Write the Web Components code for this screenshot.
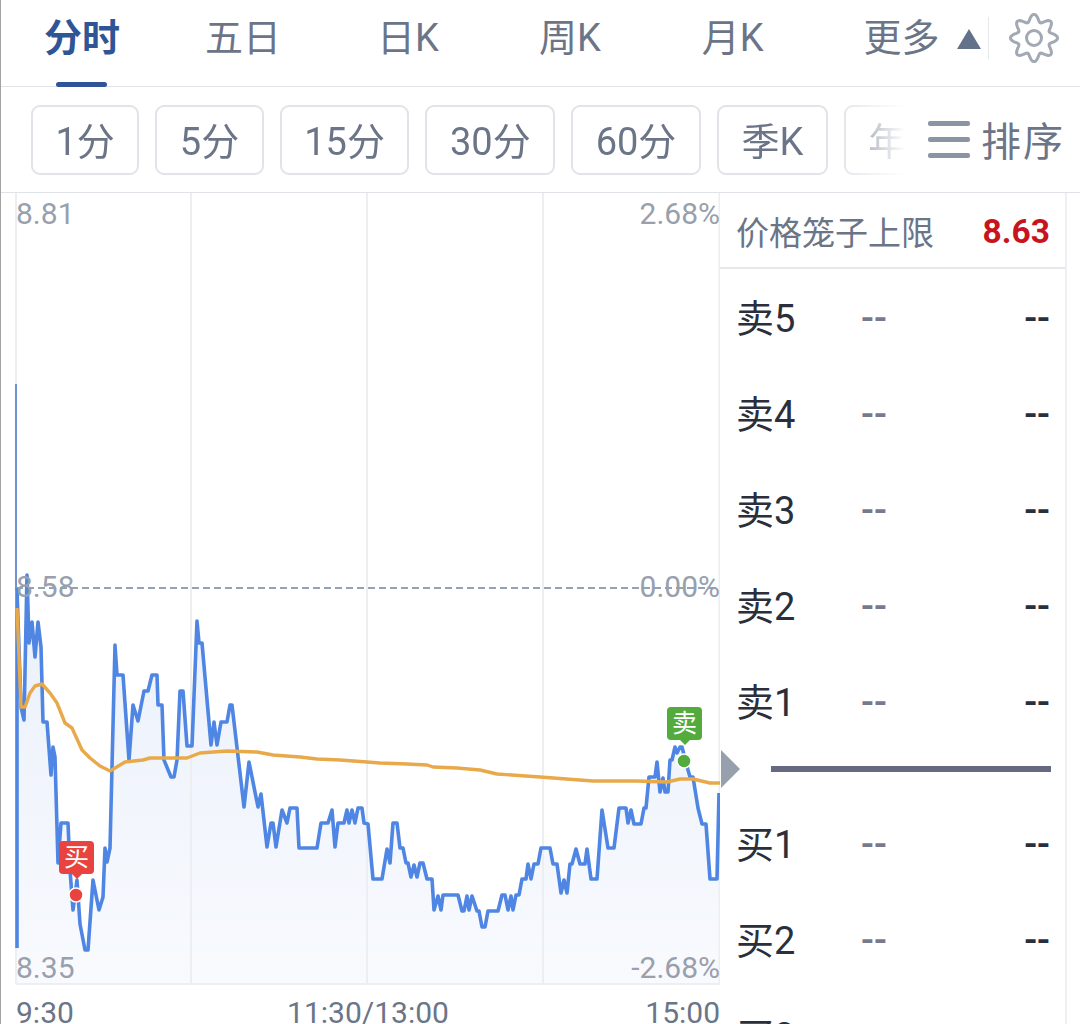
<!doctype html>
<html lang="zh">
<head>
<meta charset="utf-8">
<title>分时</title>
<style>
  html, body { margin: 0; padding: 0; background: #fff; overflow: hidden; }
  body { font-family: Roboto, "Noto Sans CJK SC", sans-serif; }
  quote-app { width: 1080px; height: 1024px; }
</style>
</head>
<body>

<template id="quote-app-template">
  <style>
    :host { display: flex; flex-direction: column; box-sizing: border-box; border-left: 1px solid #a3a3a3; overflow: hidden; background: #fff; }
    .body { display: flex; flex: 1; min-height: 0; }
  </style>
  <period-tabs></period-tabs>
  <period-chips></period-chips>
  <div class="body">
    <time-chart></time-chart>
    <order-book></order-book>
  </div>
</template>

<template id="period-tabs-template">
  <style>
    :host { display: flex; flex: none; box-sizing: border-box; height: 87px; padding-left: 43px; border-bottom: 1px solid #dfe2e7; font-size: 38px; color: #6b7587; position: relative; }
    .tab { line-height: 76px; white-space: nowrap; margin-right: 100px; }
    .tab.on { color: #2f5596; font-weight: 700; margin-right: 85px; position: relative; }
    .tab.on::after { content: ""; position: absolute; left: 12px; bottom: -1px; width: 51px; height: 5px; border-radius: 3px; background: #2f5596; }
    .tab.five { margin-right: 96px; }
    .tab.week { margin-right: 101px; }
    .more { margin-right: 0; display: flex; align-items: center; height: 76px; }
    .tri { width: 0; height: 0; margin-left: 17px; margin-top: 1px; border-left: 12px solid transparent; border-right: 12px solid transparent; border-bottom: 20px solid #63718a; }
    .sep { width: 1px; height: 42px; margin: 17px 0 0 7px; background: #e6e8ec; }
    svg { width: 50px; height: 50px; margin: 13px 0 0 20px; }
  </style>
  <div class="tab on">分时</div>
  <div class="tab five">五日</div>
  <div class="tab">日K</div>
  <div class="tab week">周K</div>
  <div class="tab">月K</div>
  <div class="tab more">更多<span class="tri"></span></div>
  <div class="sep"></div>
  <svg viewBox="0 0 50 50" fill="none" stroke="#a2a9b5" stroke-width="3" stroke-linejoin="round">
    <path id="gear"></path>
    <circle cx="25" cy="25" r="7.5"></circle>
  </svg>
</template>

<template id="period-chips-template">
  <style>
    :host { display: flex; flex: none; box-sizing: border-box; height: 106px; border-bottom: 1px solid #dfe2e7; color: #6b7587; font-size: 38px; }
    .list { display: flex; gap: 16px; width: 904px; flex: none; box-sizing: border-box; padding: 18px 0 0 30px; overflow: hidden;
      -webkit-mask-image: linear-gradient(to right, #000 835px, rgba(0,0,0,.45) 870px, transparent 904px); mask-image: linear-gradient(to right, #000 835px, rgba(0,0,0,.45) 870px, transparent 904px); }
    .sort { display: flex; align-items: center; margin-left: 23px; height: 105px; }
    .lines { display: flex; flex-direction: column; gap: 11px; margin-right: 11px; }
    .lines i { display: block; width: 42px; height: 5px; border-radius: 2px; background: #8a94a4; }
    .sort span { color: #6b7587; font-size: 40px; letter-spacing: 2px; white-space: nowrap; margin-top: -2px; }
  </style>
  <div class="list"><slot></slot></div>
  <div class="sort">
    <div class="lines"><i></i><i></i><i></i></div>
    <span>排序</span>
  </div>
</template>

<template id="chip-item-template">
  <style>
    :host { display: flex; flex: none; box-sizing: border-box; height: 70px; padding: 0 22.5px 3px; align-items: center; justify-content: center; border: 2px solid #e1e3e8; border-radius: 9px; white-space: nowrap; }
  </style>
  <slot></slot>
</template>

<template id="time-chart-template">
  <style>
    :host { display: block; position: relative; flex: none; width: 719px; height: 831px; font-size: 30px; color: #98a0ad; }
    svg { display: block; width: 719px; height: 792px; }
    .lb { position: absolute; line-height: 34px; white-space: nowrap; }
    .x { display: grid; grid-template-columns: 1fr auto 1fr; padding-left: 15px; color: #6b7587; line-height: 23px; margin-top: 16px; }
    .x span:last-child { text-align: right; }
    .tag { position: absolute; width: 35px; height: 33px; border-radius: 4px; color: #fff; font-size: 25px; line-height: 33px; text-align: center; }
    .tag::after { content: ""; position: absolute; left: 12px; bottom: -5px; width: 0; height: 0; border-left: 6px solid transparent; border-right: 6px solid transparent; border-top: 6px solid currentColor; }
    .tag.buy { background: #e8433f; left: 58px; top: 648px; }
    .tag.buy::after { border-top-color: #e8433f; }
    .tag.sell { background: #52ab3c; left: 666px; top: 514px; }
    .tag.sell::after { border-top-color: #52ab3c; }
  </style>
  <svg viewBox="1 193 719 792">
    <defs>
      <linearGradient id="area" gradientUnits="userSpaceOnUse" x1="0" y1="600" x2="0" y2="984">
        <stop offset="0" stop-color="#ebf0fa"></stop>
        <stop offset="1" stop-color="#f8fafe"></stop>
      </linearGradient>
    </defs>
    <path id="fill" fill="url(#area)"></path>
    <g stroke="#eceef2" stroke-width="2" fill="none">
      <path d="M16 193V984M191 193V984M367 193V984M543 193V984M16 984H720M719.5 193V984"></path>
    </g>
    <path d="M16 588H720" stroke="#93a2b4" stroke-width="2" stroke-dasharray="7 4" fill="none"></path>
    <path d="M16 384V590" stroke="#6f93cf" stroke-width="2" fill="none"></path>
    <path id="line" fill="none" stroke="#4f86e3" stroke-width="3.6" stroke-linejoin="round"></path>
    <path id="avg" fill="none" stroke="#e8a94a" stroke-width="3.4" stroke-linejoin="round"></path>
    <circle cx="76" cy="895" r="7" fill="#e8433f" stroke="#fff" stroke-width="1.5"></circle>
    <circle cx="684" cy="761" r="7" fill="#52ab3c" stroke="#fff" stroke-width="1.5"></circle>
  </svg>
  <span class="lb" style="left:15px;top:4px">8.81</span>
  <span class="lb" style="right:0;top:4px">2.68%</span>
  <span class="lb" style="left:15px;top:377px">8.58</span>
  <span class="lb" style="right:0;top:377px">0.00%</span>
  <span class="lb" style="left:15px;top:758px">8.35</span>
  <span class="lb" style="right:0;top:758px">-2.68%</span>
  <div class="tag buy">买</div>
  <div class="tag sell">卖</div>
  <div class="x"><span>9:30</span><span>11:30/13:00</span><span>15:00</span></div>
</template>

<template id="order-book-template">
  <style>
    :host { display: block; box-sizing: border-box; width: 347px; flex: none; border-right: 2px solid #eeeff2; overflow: hidden; }
    .cap { display: flex; justify-content: space-between; align-items: center; box-sizing: border-box; height: 76px; padding: 2px 15px 0 16px; border-bottom: 2px solid #e6e8ec; color: #6b7587; font-size: 33px; }
    .cap b { color: #c8151d; font-weight: 700; font-size: 33.5px; }
    .mid { position: relative; height: 46px; box-sizing: border-box; padding: 17px 0 0 51px; }
    .mid i { display: block; width: 280px; height: 6px; background: #666a80; }
    .mid u { position: absolute; left: 1px; top: 1px; width: 0; height: 0; border-top: 19px solid transparent; border-bottom: 19px solid transparent; border-left: 19px solid #98a0ae; }
  </style>
  <div class="cap"><span>价格笼子上限</span><b>8.63</b></div>
  <book-row label="卖5"></book-row>
  <book-row label="卖4"></book-row>
  <book-row label="卖3"></book-row>
  <book-row label="卖2"></book-row>
  <book-row label="卖1"></book-row>
  <div class="mid"><u></u><i></i></div>
  <book-row label="买1"></book-row>
  <book-row label="买2"></book-row>
  <book-row label="买3"></book-row>
</template>

<template id="book-row-template">
  <style>
    :host { display: grid; grid-template-columns: 125px 1fr auto; align-items: center; height: 96px; padding: 0 15px 0 16px; font-size: 38px; color: #2a2f3b; }
    #label { margin-bottom: 4px; }
    .p { color: #777a8b; font-weight: 500; margin-top: 2px; }
    .v { font-weight: 500; margin-top: 2px; }
  </style>
  <span id="label"></span><span class="p">--</span><span class="v">--</span>
</template>

<script>
  const BLUE = [[17,948],[17,590],[21,707],[24,720],[27,575],[29,643],[32,622],[35,657],[38,622],[41,647],[43,722],[47,722],[51,775],[53,747],[55,757],[58,863],[61,823],[68,823],[70,870],[73,910],[77,880],[80,924],[85,950],[88,950],[93,880],[99,910],[103,897],[105,848],[107,862],[110,848],[112,767],[115,645],[117,675],[123,675],[129,760],[133,705],[138,721],[144,691],[148,691],[152,675],[157,675],[158,705],[162,705],[164,760],[171,777],[174,777],[177,760],[180,691],[183,691],[187,746],[192,746],[197,621],[199,643],[202,643],[211,745],[214,722],[217,745],[221,722],[227,722],[230,705],[232,705],[244,807],[249,762],[258,807],[261,794],[267,847],[271,823],[273,823],[276,847],[282,810],[287,823],[290,808],[297,808],[299,848],[317,848],[321,823],[328,823],[332,810],[335,847],[338,823],[344,823],[347,810],[349,823],[352,810],[355,823],[358,808],[362,808],[364,823],[368,824],[373,879],[382,879],[387,849],[390,863],[393,823],[397,823],[400,848],[403,848],[406,863],[408,863],[411,877],[414,865],[417,877],[420,863],[423,863],[427,879],[432,879],[434,910],[438,896],[441,910],[443,895],[458,895],[462,911],[464,911],[467,896],[469,910],[472,896],[477,911],[479,911],[482,927],[485,927],[488,911],[498,911],[502,895],[505,895],[508,910],[511,896],[513,910],[516,895],[519,895],[522,879],[526,879],[528,864],[531,879],[534,864],[538,864],[541,848],[550,848],[553,864],[557,864],[561,893],[564,880],[567,893],[570,864],[572,864],[576,849],[580,864],[585,864],[587,849],[591,879],[597,879],[602,810],[608,848],[614,848],[619,808],[626,808],[628,823],[631,810],[634,824],[641,824],[644,808],[646,808],[649,777],[655,777],[657,762],[660,792],[663,778],[665,792],[668,792],[670,760],[672,760],[675,747],[677,753],[680,747],[682,747],[688,770],[690,777],[693,777],[698,808],[702,824],[706,824],[710,879],[717,879],[719,793]];
  const AVG = [[17,608],[21,707],[25,707],[30,693],[35,686],[42,684],[50,693],[57,703],[65,723],[72,728],[82,750],[90,758],[100,766],[110,771],[125,762],[143,760],[150,758],[187,758],[200,753],[227,751],[257,752],[273,755],[300,757],[317,759],[340,760],[367,762],[380,763],[407,764],[427,765],[433,767],[457,768],[480,770],[497,774],[540,777],[593,781],[637,781],[667,782],[680,779],[693,779],[710,783],[720,783]];
  const toPath = pts => 'M' + pts.map(p => p.join(' ')).join('L');

  function shadowFrom(el, id) {
    const root = el.attachShadow({mode: 'open'});
    root.appendChild(document.querySelector(id).content.cloneNode(true));
    return root;
  }

  class QuoteApp extends HTMLElement {
    constructor() { super(); shadowFrom(this, '#quote-app-template'); }
  }

  class PeriodTabs extends HTMLElement {
    constructor() {
      super();
      const root = shadowFrom(this, '#period-tabs-template');
      // gear outline: radius waves eight times round the centre
      const pts = [];
      for (let i = 0; i < 120; i++) {
        const t = (i / 120) * Math.PI * 2;
        const r = 20 + 3.6 * Math.cos(8 * t);
        pts.push([(25 + r * Math.cos(t)).toFixed(2), (25 + r * Math.sin(t)).toFixed(2)]);
      }
      root.querySelector('#gear').setAttribute('d', toPath(pts) + 'Z');
    }
  }

  class PeriodChips extends HTMLElement {
    constructor() {
      super();
      shadowFrom(this, '#period-chips-template');
      ['1分','5分','15分','30分','60分','季K','年K'].forEach(t => {
        const c = document.createElement('chip-item');
        c.textContent = t;
        this.appendChild(c);
      });
    }
  }

  class ChipItem extends HTMLElement {
    constructor() { super(); shadowFrom(this, '#chip-item-template'); }
  }

  class TimeChart extends HTMLElement {
    constructor() {
      super();
      const root = shadowFrom(this, '#time-chart-template');
      root.querySelector('#line').setAttribute('d', toPath(BLUE));
      root.querySelector('#avg').setAttribute('d', toPath(AVG));
      root.querySelector('#fill').setAttribute('d', toPath(BLUE.slice(1)) + 'L719 984L17 984Z');
    }
  }

  class OrderBook extends HTMLElement {
    constructor() { super(); shadowFrom(this, '#order-book-template'); }
  }

  class BookRow extends HTMLElement {
    constructor() { super(); shadowFrom(this, '#book-row-template'); }
    connectedCallback() { this.shadowRoot.querySelector('#label').textContent = this.getAttribute('label'); }
  }

  customElements.define('chip-item', ChipItem);
  customElements.define('book-row', BookRow);
  customElements.define('period-tabs', PeriodTabs);
  customElements.define('period-chips', PeriodChips);
  customElements.define('time-chart', TimeChart);
  customElements.define('order-book', OrderBook);
  customElements.define('quote-app', QuoteApp);
</script>

<quote-app></quote-app>
</body>
</html>
